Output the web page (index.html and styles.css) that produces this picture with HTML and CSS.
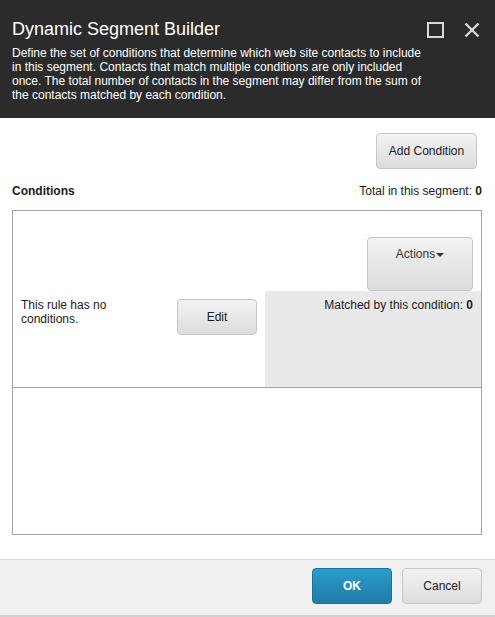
FILE: index.html
```html
<!DOCTYPE html>
<html lang="en">
    <head>
        <meta charset="UTF-8">
        <meta name="viewport" content="width=device-width, initial-scale=1.0">
        <title>Dynamic Segment Builder</title>
        <link rel="stylesheet" href="styles.css">
    </head>
    <body>
        <div class="dialog">
            <header class="dialog-header">
                <div class="header-text">
                    <h1 class="dialog-title">Dynamic Segment Builder</h1>
                    <p class="dialog-desc">Define the set of conditions that determine which web site contacts to include in this segment. Contacts that match multiple conditions are only included once. The total number of contacts in the segment may differ from the sum of the contacts matched by each condition.</p>
                </div>
                <div class="window-controls">
                    <svg class="ctrl-max" width="17" height="16" viewBox="0 0 17 16">
                        <rect x="1" y="1" width="15" height="14" fill="none" stroke="#d9d9d9" stroke-width="2"/>
                    </svg>
                    <svg class="ctrl-close" width="16" height="16" viewBox="0 0 16 16">
                        <path d="M1.5 1.5 L14.5 14.5 M14.5 1.5 L1.5 14.5" stroke="#d9d9d9" stroke-width="2.3" fill="none"/>
                    </svg>
                </div>
            </header>
            <main class="dialog-body">
                <div class="toolbar">
                    <button class="btn btn-add">Add Condition</button>
                </div>
                <div class="conditions-head">
                    <span class="conditions-label">Conditions</span>
                    <span class="segment-total">Total in this segment: <b>0</b></span>
                </div>
                <div class="conditions-box">
                    <div class="rule">
                        <div class="rule-actions">
                            <button class="btn btn-actions">Actions<span class="caret"></span></button>
                        </div>
                        <div class="rule-text">This rule has no conditions.</div>
                        <div class="rule-edit">
                            <button class="btn btn-edit">Edit</button>
                        </div>
                        <div class="rule-matched">Matched by this condition: <b>0</b></div>
                    </div>
                    <div class="rule-empty"></div>
                </div>
            </main>
            <footer class="dialog-footer">
                <button class="btn btn-primary">OK</button>
                <button class="btn btn-cancel">Cancel</button>
            </footer>
        </div>
    </body>
</html>
```
FILE: styles.css
```css
body
{
    margin: 0;
    background-color: #ffffff;
    font-family: "Liberation Sans", Arial, sans-serif;
    font-size: 12px;
    color: #1a1a1a;
}
.dialog-header
{
    display: flex;
    box-sizing: border-box;
    height: 118px;
    padding: 18px 0 0 12px;
    background-color: #2b2b2b;
    color: #ffffff;
}
.header-text
{
    width: 415px;
}
.dialog-title
{
    margin: 0;
    font-size: 18px;
    font-weight: normal;
    line-height: 22px;
}
.dialog-desc
{
    margin: 6px 0 0;
    line-height: 14px;
}
.window-controls
{
    display: flex;
    gap: 20px;
    padding-top: 4px;
}
.ctrl-max,
.ctrl-close
{
    display: block;
}
.dialog-body
{
    padding: 15px 13px 0 12px;
}
.toolbar
{
    display: flex;
    justify-content: flex-end;
    padding-right: 5px;
}
.btn
{
    box-sizing: border-box;
    height: 36px;
    padding: 0;
    border: 1px solid #c6c6c6;
    border-radius: 4px;
    background: linear-gradient(#f3f3f3, #dcdcdc);
    font-family: inherit;
    font-size: 12px;
    line-height: 14px;
    color: #1a1a1a;
    cursor: pointer;
}
.btn-add
{
    width: 101px;
}
.conditions-head
{
    display: flex;
    justify-content: space-between;
    margin-top: 15px;
    line-height: 14px;
}
.conditions-label
{
    font-weight: bold;
}
.conditions-box
{
    box-sizing: border-box;
    height: 325px;
    margin-top: 12px;
    border: 1px solid #a3a3a3;
}
.rule
{
    display: grid;
    grid-template-columns: 1fr 96px 216px;
    grid-template-rows: 80px 96px;
    border-bottom: 1px solid #a3a3a3;
}
.rule-actions
{
    grid-column: 3;
    grid-row: 1;
    display: flex;
    justify-content: flex-end;
    align-items: flex-end;
    padding-right: 8px;
}
.btn-actions
{
    width: 106px;
    height: 54px;
    padding: 9px 0 29px;
    color: #333333;
}
.caret
{
    display: inline-block;
    margin-left: 1px;
    vertical-align: middle;
    border-top: 4px solid #333333;
    border-left: 4px solid transparent;
    border-right: 4px solid transparent;
}
.rule-text
{
    grid-column: 1;
    grid-row: 2;
    padding: 7px 8px;
    line-height: 14px;
}
.rule-edit
{
    grid-column: 2;
    grid-row: 2;
    padding: 8px 8px 0;
}
.btn-edit
{
    width: 80px;
    height: 36px;
}
.rule-matched
{
    grid-column: 3;
    grid-row: 2;
    padding: 7px 8px;
    background-color: #e9e9e9;
    text-align: right;
    line-height: 14px;
}
.dialog-footer
{
    display: flex;
    justify-content: flex-end;
    gap: 10px;
    margin-top: 24px;
    padding: 8px 13px 11px;
    border-top: 1px solid #dedede;
    border-bottom: 2px solid #d0d0d0;
    background-color: #f0f0f0;
}
.btn-primary
{
    width: 80px;
    border-color: #1d7299;
    background: linear-gradient(#2b9dcb, #1f7ca5);
    color: #ffffff;
    font-weight: bold;
}
.btn-cancel
{
    width: 80px;
}
```
